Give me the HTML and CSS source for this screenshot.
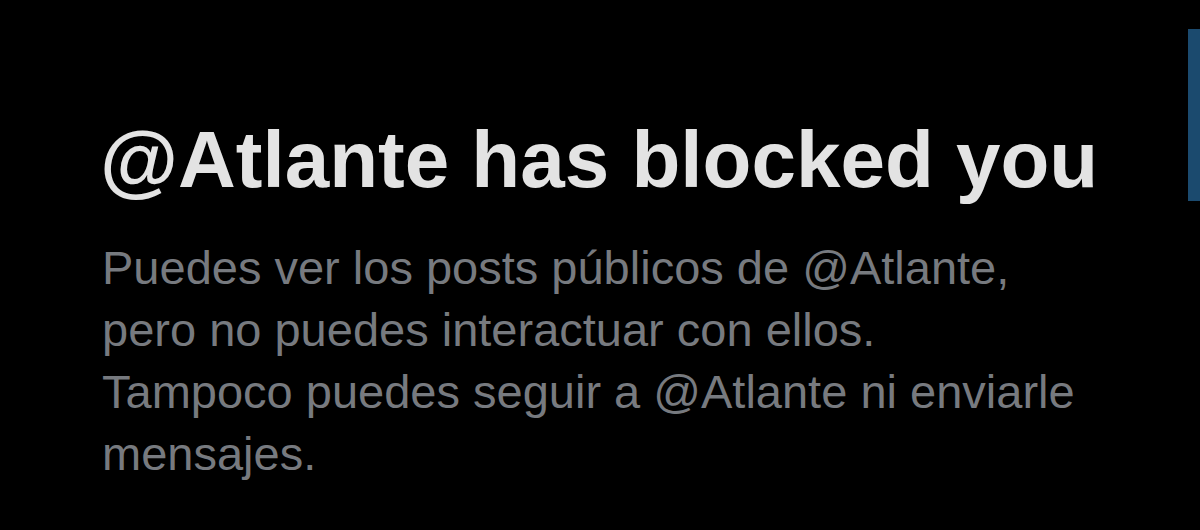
FILE: index.html
```html
<!DOCTYPE html>
<html lang="es">
<head>
    <meta charset="UTF-8">
    <meta name="viewport" content="width=device-width, initial-scale=1.0">
    <title>@Atlante has blocked you</title>
    <link rel="stylesheet" href="styles.css">
</head>
<body>
    <div class="screen">
        <div class="blocked">
            <h1>@Atlante has blocked you</h1>
            <p>Puedes ver los posts públicos de @Atlante,<br>
            pero no puedes interactuar con ellos.<br>
            Tampoco puedes seguir a @Atlante ni enviarle<br>
            mensajes.</p>
        </div>
        <div class="scroll-thumb"></div>
    </div>
</body>
</html>
```

FILE: styles.css
```css
* {
    margin: 0;
    padding: 0;
    box-sizing: border-box;
    font-family: "Liberation Sans", Arial, sans-serif;
}

body {
    background: #000;
    width: 1200px;
    height: 530px;
    overflow: hidden;
}

.screen {
    position: relative;
    height: 530px;
    padding: 112px 0 0 100px;
}

.blocked h1 {
    font-size: 80px;
    line-height: 96px;
    font-weight: bold;
    color: #e3e3e3;
    margin-bottom: 29px;
}

.blocked p {
    font-size: 47px;
    line-height: 62px;
    color: #777a7f;
    margin-left: 2px;
}

/* barre de défilement à droite */
.scroll-thumb {
    position: absolute;
    top: 29px;
    right: 0;
    width: 12px;
    height: 172px;
    background: #1b4a6e;
}
```
